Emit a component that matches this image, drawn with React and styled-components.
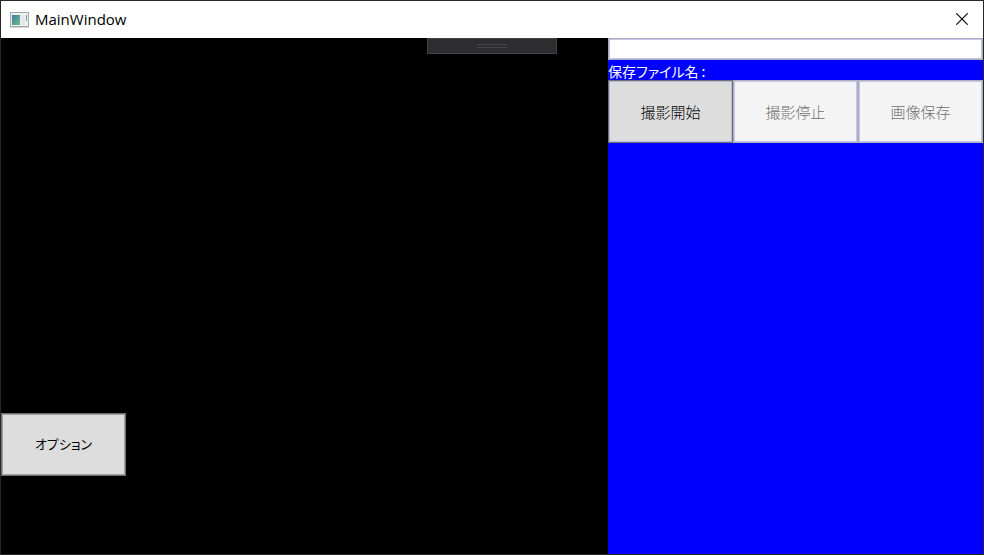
import React, { useState } from "react";
import styled, { createGlobalStyle } from "styled-components";

const GlobalStyle = createGlobalStyle`
  *, *::before, *::after { box-sizing: border-box; }
  body {
    margin: 0;
    font-family: "Open Sans", "Noto Sans CJK JP", sans-serif;
    font-size: 15px;
  }
`;

const Window = styled.div`
  display: flex;
  flex-direction: column;
  min-height: 100vh;
  border: 1px solid #262626;
  background: #000;
`;

const TitleBar = styled.header`
  display: flex;
  align-items: center;
  flex: none;
  height: 37px;
  padding-left: 9px;
  background: #fff;
`;

const Title = styled.h1`
  flex: 1;
  margin: 0 0 0 6px;
  font-size: 15px;
  line-height: 20px;
  padding-bottom: 2px;
  font-weight: 400;
  color: #000;
`;

const CloseButton = styled.button`
  display: flex;
  align-items: center;
  justify-content: center;
  width: 42px;
  height: 35px;
  margin-bottom: 2px;
  padding: 0;
  border: 0;
  background: transparent;
  color: #000;
`;

const Content = styled.main`
  display: grid;
  grid-template-columns: minmax(0, 1fr) 375px;
  flex: 1;
`;

const Preview = styled.section`
  position: relative;
  display: flex;
  flex-direction: column;
  justify-content: flex-end;
  align-items: flex-start;
  padding-bottom: 78px;
  background: #000;
`;

const DebugHandle = styled.div`
  position: absolute;
  top: 0;
  right: 51px;
  display: flex;
  align-items: center;
  justify-content: center;
  width: 130px;
  height: 16px;
  border: 1px solid #434346;
  background: #2d2d30;
`;

const Grip = styled.span`
  width: 30px;
  height: 4px;
  border: solid #464646;
  border-width: 1px 0;
`;

const Panel = styled.section`
  display: flex;
  flex-direction: column;
  background: #00f;
`;

const FileInput = styled.input`
  width: 100%;
  height: 22px;
  padding: 0 3px;
  border: 1px solid #abadb3;
  border-radius: 0;
  outline: 1px solid #c3c3f0;
  outline-offset: -2px;
  background: #fff;
  font: inherit;
`;

const FileLabel = styled.label`
  height: 20px;
  font-family: "Noto Sans CJK JP", sans-serif;
  font-size: 14px;
  font-feature-settings: "palt";
  line-height: 22px;
  color: #fff;
  white-space: nowrap;
`;

const ButtonRow = styled.div`
  display: grid;
  grid-template-columns: repeat(3, minmax(0, 1fr));
`;

const ActionButton = styled.button`
  min-width: 125px;
  height: 63px;
  padding: 0;
  border: 1px solid #707070;
  border-radius: 0;
  outline: 1px solid #b9b9e0;
  outline-offset: -2px;
  background: #ddd;
  color: #000;
  font-family: "Noto Sans CJK JP", sans-serif;
  font-size: 15px;
  font-weight: 300;
  font-feature-settings: "palt";

  &:disabled {
    border-color: #adb2b5;
    outline-color: #c3c3f0;
    background: #f4f4f4;
    color: #707070;
  }
`;

const OptionButton = styled(ActionButton)`
  padding-bottom: 2px;
  outline-color: #a0a0a0;
  font-size: 13px;
  font-weight: 400;
`;

function AppIcon() {
  return (
    <svg width="19" height="16" viewBox="0 0 19 16" aria-hidden="true">
      <defs>
        <linearGradient id="pane" x1="0" y1="0" x2="1" y2="1">
          <stop offset="0" stopColor="#4176a0" />
          <stop offset="1" stopColor="#6fc08c" />
        </linearGradient>
      </defs>
      <rect x="0.5" y="0.5" width="18" height="14" fill="#f0f0f0" stroke="#a4a8ac" />
      <path d="M0 15.5H19" stroke="#d8d8d8" />
      <rect x="2" y="3" width="8" height="10" fill="url(#pane)" />
      <rect x="11" y="3" width="4" height="10" fill="#e4e7e8" />
      <rect x="16" y="3" width="1" height="6" fill="#65a68c" />
    </svg>
  );
}

function CloseIcon() {
  return (
    <svg width="12" height="12" viewBox="0 0 12 12" aria-hidden="true">
      <path d="M0.3 0.3L11.7 11.7M11.7 0.3L0.3 11.7" stroke="currentColor" strokeWidth="1.1" />
    </svg>
  );
}

export default function App() {
  const [fileName, setFileName] = useState("");
  const [recording, setRecording] = useState(false);

  return (
    <>
      <GlobalStyle />
      <Window>
        <TitleBar>
          <AppIcon />
          <Title>MainWindow</Title>
          <CloseButton type="button" aria-label="Close">
            <CloseIcon />
          </CloseButton>
        </TitleBar>
        <Content>
          <Preview>
            <DebugHandle>
              <Grip />
            </DebugHandle>
            <OptionButton type="button">オプション</OptionButton>
          </Preview>
          <Panel>
            <FileInput
              id="file-name"
              type="text"
              value={fileName}
              onChange={(e) => setFileName(e.target.value)}
            />
            <FileLabel htmlFor="file-name">保存ファイル名 :</FileLabel>
            <ButtonRow>
              <ActionButton type="button" disabled={recording} onClick={() => setRecording(true)}>
                撮影開始
              </ActionButton>
              <ActionButton type="button" disabled={!recording} onClick={() => setRecording(false)}>
                撮影停止
              </ActionButton>
              <ActionButton type="button" disabled>
                画像保存
              </ActionButton>
            </ButtonRow>
          </Panel>
        </Content>
      </Window>
    </>
  );
}
